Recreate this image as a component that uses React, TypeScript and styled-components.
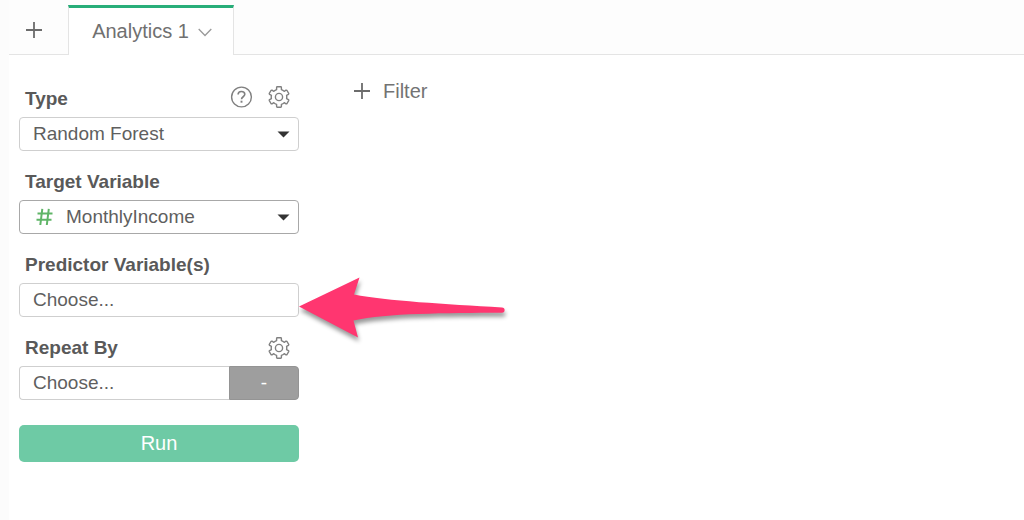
import React from "react";
import styled, { createGlobalStyle } from "styled-components";

const GlobalStyle = createGlobalStyle`
  *, *::before, *::after { box-sizing: border-box; }
  body {
    margin: 0;
    background: #fff;
    color: #5f5f5f;
    font-family: "Liberation Sans", Arial, sans-serif;
  }
  button, select { font: inherit; color: inherit; }
`;

const Page = styled.div`
  min-height: 100vh;
  padding-left: 9px;
  background: linear-gradient(to right, #fcfcfc 9px, #fff 9px);
`;

const TabBar = styled.nav`
  display: flex;
  align-items: stretch;
  height: 55px;
  padding-top: 5px;
  background: #fdfdfd;
  border-bottom: 1px solid #e4e4e4;
`;

const AddTab = styled.button`
  display: flex;
  align-items: center;
  justify-content: center;
  width: 59px;
  padding: 0 9px 0 0;
  border: 0;
  background: none;
`;

const Tab = styled.button`
  display: flex;
  justify-content: center;
  align-items: center;
  gap: 9px;
  width: 166px;
  margin-bottom: -1px;
  padding: 0 0 2px 2px;
  border: 1px solid #e4e4e4;
  border-top: 3px solid #27ad78;
  border-bottom: 0;
  background: #fff;
  color: #707070;
  font-size: 20px;
  line-height: 24px;

  svg { margin-top: 4px; }
`;

const Workspace = styled.main`
  display: flex;
  align-items: flex-start;
`;

const Settings = styled.form`
  display: flex;
  flex-direction: column;
  gap: 17px;
  width: 290px;
  padding: 30px 0 0 10px;
`;

const Field = styled.div`
  position: relative;
  display: flex;
  flex-direction: column;
  gap: 4px;
`;

const FieldHeader = styled.div`
  display: flex;
  align-items: center;
  justify-content: space-between;
  height: 28px;
  padding: 0 8px 0 6px;
`;

const Label = styled.label`
  color: #595959;
  font-size: 19px;
  font-weight: 700;
  line-height: 24px;
`;

const Tools = styled.div`
  display: flex;
  gap: 14px;
  padding-bottom: 4px;
`;

const IconButton = styled.button`
  display: flex;
  padding: 0;
  border: 0;
  background: none;
  color: #808080;
`;

const SelectBox = styled.div<{ $strong?: boolean }>`
  position: relative;
  display: flex;
  align-items: center;
  height: 34px;
  border: 1px solid ${(p) => (p.$strong ? "#a8a8a8" : "#cfcfcf")};
  border-radius: 4px;
  background: #fff;
`;

const Select = styled.select<{ $withIcon?: boolean }>`
  appearance: none;
  width: 100%;
  height: 100%;
  padding: 0 32px 2px ${(p) => (p.$withIcon ? 46 : 13)}px;
  border: 0;
  border-radius: 4px;
  background: transparent;
  font-size: 19px;
`;

const TypeMark = styled.svg`
  position: absolute;
  left: 16px;
  pointer-events: none;
`;

const Caret = styled.svg`
  position: absolute;
  right: 8px;
  pointer-events: none;
`;

const Picker = styled.button`
  flex: 1;
  height: 34px;
  padding: 0 13px;
  border: 1px solid #cfcfcf;
  border-radius: 4px;
  background: #fff;
  font-size: 19px;
  line-height: 24px;
  text-align: left;
`;

const PickerRow = styled.div`
  display: flex;
`;

const PickerGroup = styled(PickerRow)`
  ${Picker} {
    border-right: 0;
    border-radius: 4px 0 0 4px;
  }
`;

const Remove = styled.button`
  width: 70px;
  height: 34px;
  padding: 0;
  border: 1px solid #949494;
  border-radius: 0 4px 4px 0;
  background: #9e9e9e;
  color: #fff;
  font-size: 19px;
  line-height: 24px;
`;

const Run = styled.button`
  height: 37px;
  margin-top: 8px;
  padding: 0 0 2px;
  border: 0;
  border-radius: 5px;
  background: #6ecaa5;
  color: #fff;
  font-size: 20px;
  line-height: 24px;
`;

const Filter = styled.button`
  display: flex;
  align-items: center;
  gap: 12px;
  margin: 24px 0 0 54px;
  padding: 0;
  border: 0;
  background: none;
  color: #737373;
  font-size: 20px;
  line-height: 24px;
`;

const Pointer = styled.svg`
  position: absolute;
  left: 276px;
  top: 18px;
  z-index: 1;
  pointer-events: none;
  filter: drop-shadow(1px 4px 2px rgba(0, 0, 0, 0.4));
`;

const Plus = () => (
  <svg width="18" height="18" viewBox="0 0 18 18" fill="none" stroke="#6c6c6c" strokeWidth="1.8" aria-hidden="true">
    <path d="M9 1v16M1 9h16" />
  </svg>
);

const Gear = () => (
  <svg width="24" height="24" viewBox="0 0 24 24" fill="none" stroke="currentColor" strokeWidth="1.4" strokeLinejoin="round" aria-hidden="true">
    <path d="M10.3 1.8h3.4q.7 0 .7.7v2.100Q16 5.200 17.200 6.300L19 5.200q.6-.3 1 .3l1.700 2.900q.3.6-.3 1l-1.800 1q.4 1.600 0 3.200l1.800 1q.6.4.3 1l-1.700 2.900q-.4.6-1 .3l-1.800-1.100Q16 18.800 14.400 19.400v2.100q0 .7-.7.7h-3.400q-.7 0-.7-.7v-2.100Q8 18.800 6.800 17.700L5 18.800q-.6.3-1-.3l-1.700-2.900q-.3-.6.3-1l1.800-1q-.4-1.600 0-3.200l-1.800-1q-.6-.4-.3-1L4 5.500q.4-.6 1-.3l1.800 1.100Q8 5.200 9.600 4.600V2.500q0-.7.7-.7z" />
    <circle cx="12" cy="12" r="3.6" />
  </svg>
);

const Help = () => (
  <svg width="24" height="24" viewBox="0 0 24 24" fill="none" stroke="currentColor" strokeWidth="1.4" aria-hidden="true">
    <circle cx="12.500" cy="12" r="9.900" />
    <path d="M9.100 9.600c0-2 1.300-3.100 3.300-3.100s3.400 1.100 3.400 2.800c0 2.500-3.300 2.400-3.300 5" strokeWidth="1.600" />
    <path d="M12.500 15.700v2" strokeWidth="1.900" />
  </svg>
);

const DropCaret = () => (
  <Caret width="13" height="7" viewBox="0 0 13 7" aria-hidden="true">
    <path d="M.5.5h12l-6 6z" fill="#333" />
  </Caret>
);

export default function App() {
  return (
    <>
      <GlobalStyle />
      <Page>
        <TabBar>
          <AddTab type="button" aria-label="Add tab">
            <Plus />
          </AddTab>
          <Tab type="button">
            Analytics 1
            <svg width="14" height="9" viewBox="0 0 14 9" fill="none" stroke="#9a9a9a" strokeWidth="1.3" aria-hidden="true">
              <path d="M.7 1l6.300 6.500L13.300 1" />
            </svg>
          </Tab>
        </TabBar>
        <Workspace>
          <Settings onSubmit={(e) => e.preventDefault()}>
            <Field>
              <FieldHeader>
                <Label htmlFor="type">Type</Label>
                <Tools>
                  <IconButton type="button" aria-label="Help"><Help /></IconButton>
                  <IconButton type="button" aria-label="Type settings"><Gear /></IconButton>
                </Tools>
              </FieldHeader>
              <SelectBox>
                <Select id="type"><option>Random Forest</option></Select>
                <DropCaret />
              </SelectBox>
            </Field>
            <Field>
              <FieldHeader>
                <Label htmlFor="target">Target Variable</Label>
              </FieldHeader>
              <SelectBox $strong>
                <Select id="target" $withIcon><option>MonthlyIncome</option></Select>
                <TypeMark width="18" height="18" viewBox="0 0 18 18" fill="none" stroke="#5fb567" strokeWidth="2" aria-hidden="true">
                  <path d="M6.300 .8L4.300 17M12.800 .8L10.800 17M1.500 5.500h15M.5 11.800h15" />
                </TypeMark>
                <DropCaret />
              </SelectBox>
            </Field>
            <Field>
              <FieldHeader>
                <Label htmlFor="predictors">Predictor Variable(s)</Label>
              </FieldHeader>
              <PickerRow>
                <Picker type="button" id="predictors">Choose...</Picker>
              </PickerRow>
              <Pointer width="220" height="76" viewBox="0 0 220 76" aria-hidden="true">
                <path d="M4 37.500L64.500 8.500 59 25.500C92 32 150 35 207 38.500a2.600 2.600 0 0 1 0 5.200C150 44 92 44 58.500 51.500L63 68.500z" fill="#ff3670" />
              </Pointer>
            </Field>
            <Field>
              <FieldHeader>
                <Label htmlFor="repeat">Repeat By</Label>
                <IconButton type="button" aria-label="Repeat settings"><Gear /></IconButton>
              </FieldHeader>
              <PickerGroup>
                <Picker type="button" id="repeat">Choose...</Picker>
                <Remove type="button" aria-label="Remove">-</Remove>
              </PickerGroup>
            </Field>
            <Run type="submit">Run</Run>
          </Settings>
          <Filter type="button">
            <Plus />
            Filter
          </Filter>
        </Workspace>
      </Page>
    </>
  );
}
